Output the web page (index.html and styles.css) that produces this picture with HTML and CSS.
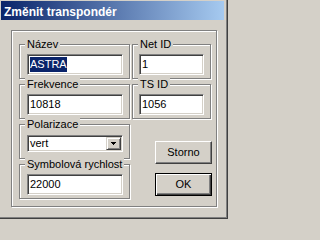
FILE: index.html
```html
<!DOCTYPE html>
<html lang="cs">
<head>
<meta charset="utf-8">
<title>Změnit transpondér</title>
<link rel="stylesheet" href="styles.css">
</head>
<body>
<div class="window">
  <div class="titlebar">Změnit transpondér</div>
  <div class="frame">
    <div class="grid">
      <div class="group">
        <span class="legend">Název</span>
        <div class="field wide"><span class="sel">ASTRA</span></div>
      </div>
      <div class="group">
        <span class="legend">Net ID</span>
        <div class="field narrow">1</div>
      </div>
      <div class="group">
        <span class="legend">Frekvence</span>
        <div class="field wide">10818</div>
      </div>
      <div class="group">
        <span class="legend">TS ID</span>
        <div class="field narrow">1056</div>
      </div>
      <div class="group g-pol">
        <span class="legend">Polarizace</span>
        <div class="combo">
          <span class="combo-text">vert</span>
          <span class="combo-btn"><svg width="5" height="3" viewBox="0 0 5 3" shape-rendering="crispEdges"><rect x="0" y="0" width="5" height="1" fill="#000"/><rect x="1" y="1" width="3" height="1" fill="#000"/><rect x="2" y="2" width="1" height="1" fill="#000"/></svg></span>
        </div>
      </div>
      <div class="buttons">
        <div class="btn">Storno</div>
        <div class="btn default">OK</div>
      </div>
      <div class="group g-sym">
        <span class="legend">Symbolová rychlost</span>
        <div class="field wide">22000</div>
      </div>
    </div>
  </div>
</div>
</body>
</html>
```
FILE: styles.css
```css
html, body {
  margin: 0;
  padding: 0;
  background: #d4d0c8;
}
body {
  font-family: "Liberation Sans", Arial, sans-serif;
  font-size: 11px;
  color: #000;
}
.window {
  width: 228px;
  height: 219px;
  box-sizing: border-box;
  border-right: 1px solid #404040;
  border-bottom: 1px solid #404040;
  box-shadow: inset -1px -1px 0 #808080;
  overflow: hidden;
}
.titlebar {
  margin: 1px 3px 0 1px;
  height: 19px;
  box-sizing: border-box;
  padding: 3px 0 0 3px;
  line-height: 16px;
  font-size: 12px;
  font-weight: bold;
  color: #fff;
  white-space: nowrap;
  background: linear-gradient(to right, #0a246a, #a6caf0);
}
.frame {
  margin: 10px 0 0 11px;
  width: 206px;
  height: 177px;
  box-sizing: border-box;
  padding: 13px 5px 0 7px;
  border: 1px solid #808080;
  box-shadow: 1px 1px 0 #fff, inset 1px 1px 0 #fff;
}
.grid {
  display: grid;
  grid-template-columns: 111px 79px;
  grid-template-rows: repeat(4, 35px);
  gap: 5px 2px;
}
.group {
  box-sizing: border-box;
  height: 35px;
  border: 1px solid #808080;
  box-shadow: 1px 1px 0 #fff, inset 1px 1px 0 #fff;
  padding: 0 0 0 5px;
  display: flex;
  flex-direction: column;
  align-items: flex-start;
}
.g-pol { grid-column: 1; grid-row: 3; }
.g-sym { grid-column: 1; grid-row: 4; }
.legend {
  margin-top: -7px;
  padding: 0 2px;
  line-height: 13px;
  background: #d4d0c8;
  white-space: nowrap;
}
.field {
  margin-top: 3px;
  height: 21px;
  box-sizing: border-box;
  border: 1px solid;
  border-color: #808080 #fff #fff #808080;
  box-shadow: inset 1px 1px 0 #404040, inset -1px -1px 0 #d4d0c8;
  background: #fff;
  padding: 0 0 0 2px;
  display: flex;
  align-items: center;
  line-height: 15px;
  white-space: nowrap;
}
.wide { width: 96px; margin-left: 2px; }
.narrow { width: 65px; margin-left: 1px; }
.sel {
  background: #0a246a;
  color: #fff;
}
.combo {
  margin: 4px 0 0 2px;
  width: 96px;
  height: 17px;
  box-sizing: border-box;
  border: 1px solid;
  border-color: #808080 #fff #fff #808080;
  box-shadow: inset 1px 1px 0 #404040, inset -1px -1px 0 #d4d0c8;
  background: #fff;
  padding: 1px;
  display: flex;
}
.combo-text {
  flex: 1;
  padding-left: 1px;
  line-height: 13px;
}
.combo-btn {
  width: 15px;
  height: 13px;
  box-sizing: border-box;
  border: 1px solid;
  border-color: #d4d0c8 #404040 #404040 #d4d0c8;
  box-shadow: inset 1px 1px 0 #fff, inset -1px -1px 0 #808080;
  background: #d4d0c8;
  display: flex;
  align-items: center;
  justify-content: center;
}
.combo-btn svg { display: block; }
.buttons {
  grid-column: 2;
  grid-row: 3 / 5;
  display: flex;
  flex-direction: column;
  align-items: flex-end;
  margin-right: -1px;
  padding-top: 17px;
  gap: 9px;
}
.btn {
  width: 57px;
  height: 23px;
  box-sizing: border-box;
  border: 1px solid;
  border-color: #fff #404040 #404040 #fff;
  box-shadow: inset -1px -1px 0 #808080;
  display: flex;
  align-items: center;
  justify-content: center;
  line-height: 13px;
}
.btn.default {
  border-color: #000;
  box-shadow: inset 1px 1px 0 #fff, inset -1px -1px 0 #404040, inset -2px -2px 0 #808080;
}
```
